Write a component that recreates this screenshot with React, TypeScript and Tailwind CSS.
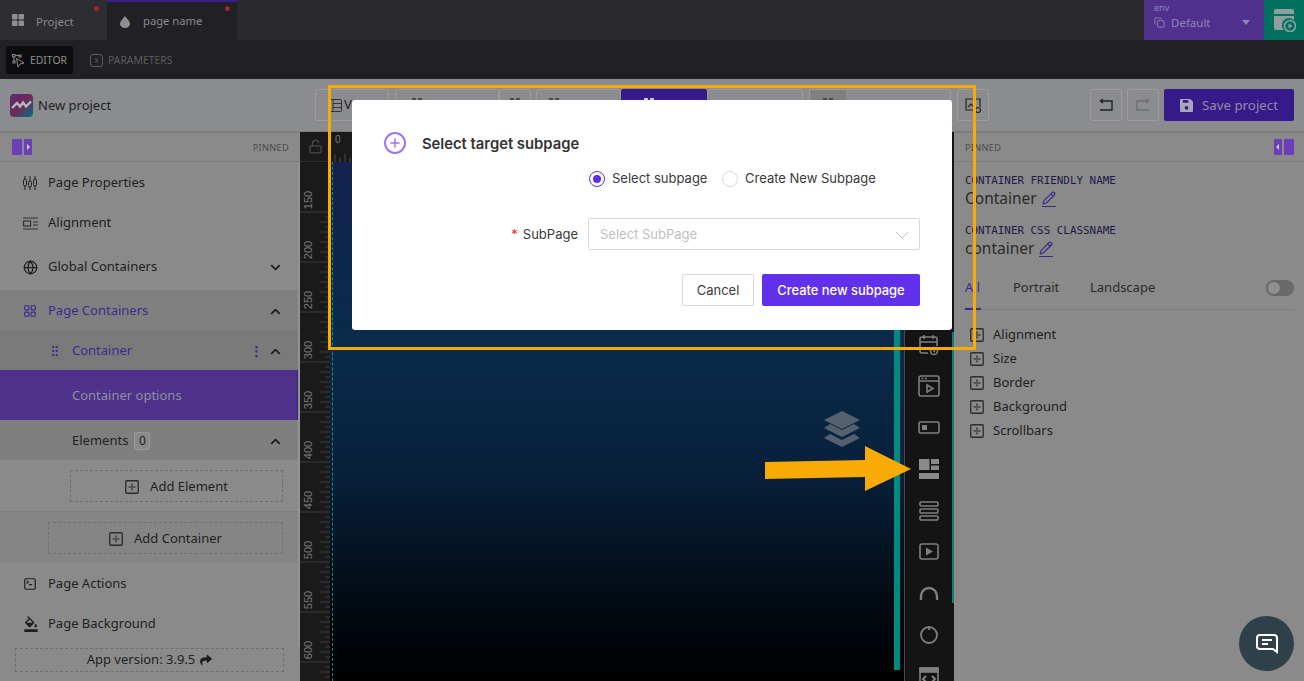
import {
  ChevronDown,
  ChevronUp,
  Copy,
  EllipsisVertical,
  Globe,
  GripVertical,
  LayoutGrid,
  LockOpen,
  Pencil,
  Plus,
  SquareTerminal,
} from "lucide-react";
import { FaShare } from "react-icons/fa";
import { MdFormatColorFill } from "react-icons/md";
import type { ReactNode } from "react";

const sans = "font-['Noto_Sans','Open_Sans',sans-serif]";

function Logo() {
  return (
    <svg width="23" height="23" viewBox="0 0 23 23">
      <defs>
        <linearGradient id="logo" x1="0" y1="0" x2="1" y2="1">
          <stop offset="0" stopColor="#5a2a78" />
          <stop offset="0.5" stopColor="#6e2a55" />
          <stop offset="1" stopColor="#006f8a" />
        </linearGradient>
      </defs>
      <rect width="23" height="23" rx="4" fill="url(#logo)" />
      <path d="M2 14l5-5 3 3.5 3-4 3 4 5-5" fill="none" stroke="#b4b8c0" strokeWidth="2.4" />
    </svg>
  );
}

function PanelToggle({ flip }: { flip?: boolean }) {
  return (
    <svg width="20" height="16" viewBox="0 0 20 16" className={flip ? "-scale-x-100" : ""}>
      <rect x="0" width="10" height="16" rx="1" fill="#6b3fb5" />
      <rect x="12" width="8" height="16" rx="1" fill="#6b3fb5" />
      <path d="M15 5l3 3-3 3z" fill="#c9c9d6" />
    </svg>
  );
}

function PlusBox() {
  return (
    <svg width="14" height="14" viewBox="0 0 14 14" className="shrink-0">
      <rect x="0.75" y="0.75" width="12.5" height="12.5" rx="1" fill="none" stroke="#2c2c2c" strokeWidth="1.3" />
      <path d="M7 3.5v7M3.5 7h7" stroke="#555" strokeWidth="2" />
    </svg>
  );
}

function ToolBtn({ className, children }: { className: string; children?: ReactNode }) {
  return (
    <div className={`h-[32px] flex items-center shrink-0 border border-[#9c9c9c] rounded-[2px] overflow-hidden ${className}`}>
      {children}
    </div>
  );
}

// only the top of these shows above the dialog
function PeekIcon({ color = "#4a4a4a" }: { color?: string }) {
  return (
    <svg width="14" height="14" viewBox="0 0 14 14" fill={color}>
      <rect x="2" y="0" width="4" height="4" />
      <rect x="8" y="0" width="4" height="4" />
    </svg>
  );
}

function NavRow({
  icon,
  label,
  className = "",
  textClass = "text-[#1f1f1f]",
  right,
}: {
  icon?: ReactNode;
  label: ReactNode;
  className?: string;
  textClass?: string;
  right?: ReactNode;
}) {
  return (
    <div className={`h-[40px] flex items-center pl-[23px] pr-[17px] pt-[2px] text-[13px] ${textClass} ${className}`}>
      {icon && <span className="w-[25px] flex shrink-0">{icon}</span>}
      <span className="flex-1 flex items-center">{label}</span>
      {right}
    </div>
  );
}

function Sidebar() {
  return (
    <aside className={`w-[300px] shrink-0 flex flex-col bg-[#8a8a8a] ${sans} relative`}>
      <div className="h-[30px] flex items-center justify-between pl-[12px] pr-[11px] border-y border-[#7d7d7d]">
        <PanelToggle />
        <span className="text-[9.2px] tracking-[0.3px] pt-[2px] text-[#4c4c4c]">PINNED</span>
      </div>
      <NavRow icon={<PropsIcon />} label="Page Properties" />
      <NavRow icon={<AlignIcon />} label="Alignment" />
      <NavRow
        className="mt-[4px]"
        icon={<Globe size={15} color="#1f1f1f" />}
        label="Global Containers"
        right={<ChevronDown size={15} strokeWidth={3} color="#1f1f1f" />}
      />
      <NavRow
        className="mt-[4px] bg-[#808080]"
        textClass="text-[#3d2a8c]"
        icon={<LayoutGrid size={14} color="#3d2a8c" />}
        label="Page Containers"
        right={<ChevronUp size={15} strokeWidth={3} color="#1f1f1f" />}
      />
      <div className="h-[40px] flex items-center pl-[48px] pr-[17px] pt-[2px] bg-[#7a7a7a] text-[13px] text-[#3d2a8c]">
        <GripVertical size={14} color="#3d2a8c" className="mr-[10px]" />
        <span className="flex-1">Container</span>
        <EllipsisVertical size={15} color="#3d2a8c" className="mr-[4px]" />
        <ChevronUp size={15} strokeWidth={3} color="#1f1f1f" />
      </div>
      <div className="h-[50px] flex items-center pl-[72px] pt-[2px] bg-[#4d318a] border-r-[3px] border-[#35207a] text-[13px] text-[#8f8f9f]">
        Container options
      </div>
      <div className="h-[40px] flex items-center pl-[72px] pr-[17px] pt-[2px] bg-[#7f7f7f] text-[13px] text-[#1f1f1f]">
        <span>Elements</span>
        <span className="ml-[6px] w-[16px] h-[18px] flex items-center justify-center border border-[#9a9a9a] rounded-[2px] bg-[#8a8a8a] text-[12px]">0</span>
        <ChevronUp size={15} strokeWidth={3} color="#1f1f1f" className="ml-auto" />
      </div>
      <div className="h-[52px] flex items-center pl-[70px] pr-[17px] border-b border-[#7d7d7d] bg-[#8a8a8a]">
        <AddButton label="Add Element" />
      </div>
      <div className="h-[51px] flex items-center pl-[48px] pr-[17px] bg-[#858585]">
        <AddButton label="Add Container" />
      </div>
      <NavRow icon={<SquareTerminal size={14} color="#1f1f1f" />} label="Page Actions" />
      <NavRow icon={<MdFormatColorFill size={16} color="#1f1f1f" />} label="Page Background" />
      <div className="mt-[5px] ml-[15px] w-[269px] h-[24px] flex items-center justify-center gap-[5px] border border-dashed border-[#6f6f6f] text-[13px] text-[#1f1f1f]">
        App version: 3.9.5 <FaShare size={12} />
      </div>
      <div className="absolute right-0 top-[30px] bottom-[34px] w-[2px] bg-[#949494]" />
    </aside>
  );
}

function AddButton({ label }: { label: string }) {
  return (
    <div className="h-[32px] flex-1 flex items-center justify-center gap-[11px] pt-[2px] border border-dashed border-[#6f6f6f] text-[13px] text-[#1f1f1f]">
      <PlusBox />
      {label}
    </div>
  );
}

function PropsIcon() {
  return (
    <svg width="14" height="14" viewBox="0 0 14 14" fill="none" stroke="#1f1f1f" strokeWidth="1">
      <path d="M2 0v14M7 0v14M12 0v14" />
      <rect x="0.5" y="3" width="3" height="7" rx="1.5" fill="#8a8a8a" />
      <rect x="5.5" y="5" width="3" height="6" rx="1.5" fill="#8a8a8a" />
      <rect x="10.5" y="3" width="3" height="7" rx="1.5" fill="#8a8a8a" />
    </svg>
  );
}

function AlignIcon() {
  return (
    <svg width="15" height="13" viewBox="0 0 15 13" fill="none" stroke="#333" strokeWidth="1.2">
      <path d="M0 1h15M0 12h15M10 5h5M10 8h5" />
      <rect x="0.6" y="4" width="7" height="5" />
    </svg>
  );
}

function Ruler() {
  const ticks = [];
  for (let y = 0; y < 520; y += 5) {
    const major = y % 50 === 0;
    const len = major ? 30 : y % 10 === 0 ? 10 : 5;
    ticks.push(<rect key={y} x={30 - len} y={y + 50 - 0.5} width={len} height="1" fill={major ? "#3c3c3c" : "#3f3f3f"} />);
  }
  const labels = [150, 200, 250, 300, 350, 400, 450, 500, 550, 600];
  return (
    <svg width="30" height="519" className="block">
      {ticks}
      {labels.map((n, i) => (
        <text
          key={n}
          transform={`translate(12 ${i * 50 + 38}) rotate(-90)`}
          textAnchor="middle"
          fontSize="11"
          fontFamily="Liberation Sans, sans-serif"
          fill="#7a7a7a"
        >
          {n}
        </text>
      ))}
    </svg>
  );
}

function IconCell({ children }: { children: ReactNode }) {
  return <div className="h-[41.5px] shrink-0 flex items-center justify-center">{children}</div>;
}

function WidgetStrip() {
  const s = { fill: "none", stroke: "#7f7f7f", strokeWidth: 1.6 };
  return (
    <div className="w-[50px] shrink-0 h-full bg-[#141414] border-l border-[#4a4a4a] pt-[192px] pr-[2px] overflow-hidden flex flex-col relative">
      <IconCell>
        <svg width="20" height="22" viewBox="0 0 20 22" {...s}>
          <path d="M9 19H3a2 2 0 0 1-2-2V5a2 2 0 0 1 2-2h13a2 2 0 0 1 2 2v7M1 8h17M5 1v4M14 1v4" />
          <circle cx="15" cy="17" r="3.5" />
          <path d="M15 15.5V17l1 1" />
        </svg>
      </IconCell>
      <IconCell>
        <svg width="22" height="22" viewBox="0 0 22 22" {...s}>
          <rect x="1" y="1" width="20" height="20" rx="2" />
          <path d="M1 6h20M3.5 3.5h2M7 3.5h2" />
          <path d="M9 10l6 3.5L9 17z" />
        </svg>
      </IconCell>
      <IconCell>
        <svg width="22" height="14" viewBox="0 0 22 14" {...s}>
          <rect x="1" y="1" width="20" height="11" rx="1.5" />
          <rect x="4" y="4" width="5" height="5" fill="#7f7f7f" stroke="none" />
        </svg>
      </IconCell>
      <IconCell>
        <svg width="20" height="20" viewBox="0 0 20 20" fill="#8a8a8a">
          <rect x="0" y="0" width="10.5" height="11" />
          <rect x="12" y="0" width="8" height="5" />
          <rect x="12" y="6.5" width="8" height="4.5" />
          <rect x="0" y="14" width="20" height="6" />
        </svg>
      </IconCell>
      <IconCell>
        <svg width="20" height="20" viewBox="0 0 20 20" {...s}>
          <rect x="1" y="1" width="18" height="4" rx="1" />
          <rect x="1" y="8" width="18" height="4" rx="1" />
          <rect x="1" y="15" width="18" height="4" rx="1" />
        </svg>
      </IconCell>
      <IconCell>
        <svg width="20" height="18" viewBox="0 0 20 18" {...s}>
          <rect x="1" y="1" width="18" height="15" rx="2" />
          <path d="M7 4.5l7 4-7 4z" fill="#7f7f7f" stroke="none" />
        </svg>
      </IconCell>
      <IconCell>
        <svg width="20" height="14" viewBox="0 0 20 14" className="-mt-[2px]" fill="none" stroke="#7f7f7f" strokeWidth="2.4">
          <path d="M2 14V10a8 8 0 0 1 16 0v4" />
        </svg>
      </IconCell>
      <IconCell>
        <svg width="20" height="20" viewBox="0 0 20 20" fill="none" stroke="#7f7f7f" strokeWidth="1.8">
          <circle cx="10" cy="10" r="8" />
          <path d="M10 2v3" />
        </svg>
      </IconCell>
      <IconCell>
        <svg width="20" height="20" viewBox="0 0 20 20" fill="none" stroke="#7f7f7f" strokeWidth="1.6">
          <rect x="1" y="1" width="18" height="18" rx="1" />
          <rect x="1" y="1" width="18" height="4" fill="#7f7f7f" />
          <path d="M7 9l-3 3 3 3M13 9l3 3-3 3" strokeWidth="2" />
        </svg>
      </IconCell>
      <div className="absolute right-0 top-[200px] w-[2px] h-[271px] bg-[#0b7f78]" />
    </div>
  );
}

function Canvas() {
  return (
    <div className="flex-1 min-w-0 flex bg-[#1a1a1a]">
      <div className="w-[30px] shrink-0 flex flex-col">
        <div className="h-[30px] shrink-0 flex items-center justify-center border-b border-[#2c2c2c]">
          <LockOpen size={15} color="#4a4a4a" />
        </div>
        <Ruler />
      </div>
      <div className="flex-1 min-w-0 flex flex-col">
        <div className="h-[30px] shrink-0 relative bg-[#1a1a1a] text-[10px] leading-[14px] pl-[5px] pt-[1px] text-[#7a7a7a] font-['Liberation_Sans',sans-serif]">
          0
          <svg width="30" height="12" className="absolute left-[3px] bottom-0">
            <path d="M2 12V4M7 12V8M12 12V4M17 12V8M22 12V4M27 12V8" stroke="#4a4a4a" />
          </svg>
        </div>
        <div className="flex-1 flex min-h-0 border-l-[3px] border-transparent relative bg-[linear-gradient(180deg,#13234f_0%,#0a2b4a_35%,#07203a_60%,#020a12_85%,#000_100%)]">
          <div className="absolute -left-[1px] top-0 bottom-0 border-l border-dashed border-[#0e8f8a]" />
          <div className="flex-1 min-w-0 flex flex-col items-end relative">
            <svg width="36" height="38" viewBox="0 0 36 38" className="absolute right-[33px] top-[249px]" fill="#55606f">
              <path d="M18 0L36 9 18 18 0 9z" />
              <path d="M6 13l12 6 12-6 6 4-18 9-18-9z" />
              <path d="M6 23l12 6 12-6 6 4-18 9-18-9z" />
            </svg>
          </div>
          <div className="w-[7px] shrink-0 flex flex-col justify-end pb-[11px]">
            <div className="ml-[1px] w-[6px] h-[350px] bg-[#018a80]" />
          </div>
          <div className="w-[4px] shrink-0" />
        </div>
      </div>
      <WidgetStrip />
    </div>
  );
}

function Inspector() {
  const props = ["Alignment", "Size", "Border", "Background", "Scrollbars"];
  return (
    <aside className={`w-[350px] shrink-0 bg-[#8a8a8a] flex flex-col ${sans}`}>
      <div className="h-[30px] flex items-center justify-between pl-[11px] pr-[10px] border-y border-[#7d7d7d]">
        <span className="text-[9.2px] tracking-[0.3px] pt-[2px] text-[#4c4c4c]">PINNED</span>
        <PanelToggle flip />
      </div>
      <div className="pl-[11px] pr-[10px] pt-[12px] flex flex-col">
        <Field title="CONTAINER FRIENDLY NAME" value="Container" />
        <div className="h-[14px]" />
        <Field title="CONTAINER CSS CLASSNAME" value="container" />
        <div className="mt-[12px] h-[38px] flex items-start border-b border-[#7f7f7f] relative text-[13px] text-[#2a2a2a] pt-[6px]">
          <span className="w-[48px] text-[#3d2a8c]">All</span>
          <span className="w-[77px]">Portrait</span>
          <span>Landscape</span>
          <div className="absolute bottom-[-1px] left-0 w-[16px] h-[2px] bg-[#3d2a8c]" />
          <div className="ml-auto mt-[2px] w-[28px] h-[16px] rounded-full bg-[#6a6a6a] p-[2px]">
            <div className="w-[12px] h-[12px] rounded-full bg-[#8f8f8f]" />
          </div>
        </div>
        <div className="mt-[13px] flex flex-col pl-[5px]">
          {props.map((p) => (
            <div key={p} className="h-[24px] flex items-center gap-[9px] text-[13px] text-[#1f1f1f]">
              <PlusBox />
              {p}
            </div>
          ))}
        </div>
      </div>
    </aside>
  );
}

function Field({ title, value }: { title: string; value: string }) {
  return (
    <div className="flex flex-col">
      <div className="h-[14px] text-[10.9px] leading-[14px] text-[#1e1a45] font-['DejaVu_Sans_Mono',monospace]">{title}</div>
      <div className="h-[22px] flex items-center gap-[5px] text-[15.5px] text-[#2a2a2a]">
        {value}
        <span className="border-b border-[#3d2a8c] pb-[1px] flex">
          <Pencil size={14} color="#3d2a8c" />
        </span>
      </div>
    </div>
  );
}

function Modal() {
  return (
    <div className="absolute left-[352px] top-[100px] w-[600px] h-[230px] bg-white rounded-[3px] pl-[32px] pr-[32px] pt-[32px] font-['Inter',sans-serif] text-[#3a3a3a]">
      <div className="flex items-center h-[22px] gap-[16px]">
        <div className="w-[22px] h-[22px] rounded-full border-2 border-[#9a75f5] flex items-center justify-center">
          <Plus size={14} color="#9a75f5" strokeWidth={2.5} />
        </div>
        <span className="text-[14.8px] pt-[3px] font-semibold text-[#333]">Select target subpage</span>
      </div>
      <div className="mt-[15px] ml-[205px] h-[20px] flex items-center text-[13px]">
        <span className="w-[16px] h-[16px] rounded-full border border-[#6030ea] flex items-center justify-center mr-[7px]">
          <span className="w-[8px] h-[8px] rounded-full bg-[#6030ea]" />
        </span>
        <span className="w-[110px]">Select subpage</span>
        <span className="w-[16px] h-[16px] rounded-full border border-[#d9d9d9] mr-[7px]" />
        <span>Create New Subpage</span>
      </div>
      <div className="mt-[29px] flex items-center">
        <div className="w-[194px] text-right text-[13px] pt-[2px]">
          <span className="text-[#f5222d] mr-[5px]">*</span>SubPage
        </div>
        <div className="ml-[10px] flex-1 h-[32px] border border-[#d9d9d9] rounded-[2px] flex items-center justify-between pl-[11px] pr-[5px] pt-[1px] text-[13px] text-[#bfbfbf]">
          Select SubPage
          <ChevronDown size={24} color="#bfbfbf" strokeWidth={1} />
        </div>
      </div>
      <div className="mt-[24px] flex justify-end gap-[8px] text-[13px]">
        <div className="w-[72px] h-[32px] pt-[2px] border border-[#d9d9d9] rounded-[2px] flex items-center justify-center">Cancel</div>
        <div className="w-[158px] h-[32px] pt-[1px] bg-[#6030ea] rounded-[2px] flex items-center justify-center text-white text-[12.9px] font-medium">Create new subpage</div>
      </div>
    </div>
  );
}

export default function App() {
  return (
    <div className={`relative w-[1304px] h-[681px] overflow-hidden flex flex-col ${sans}`}>
      {/* Tabs */}
      <div className="h-[40px] shrink-0 flex bg-[#2a2a2e]">
        <div className="w-[107px] relative flex items-center pl-[12px] pt-[3px] bg-[#2e2e32] text-[11.5px] text-[#8a8a8a]">
          <svg width="12" height="12" viewBox="0 0 12 12" fill="#8f8f8f" className="mr-[12px] -mt-[3px]">
            <rect width="5.5" height="5.5" rx="1" />
            <rect x="6.5" width="5.5" height="5.5" rx="1" />
            <rect y="6.5" width="5.5" height="5.5" rx="1" />
            <rect x="6.5" y="6.5" width="5.5" height="5.5" rx="1" />
          </svg>
          Project
          <span className="absolute right-[8px] top-[6px] w-[5px] h-[5px] rounded-full bg-[#a3262a]" />
        </div>
        <div className="w-[130px] relative flex items-center pl-[12px] pt-[1px] bg-[#212125] border-t-2 border-[#3b1f8f] text-[11.2px] text-[#8a8a8a]">
          <svg width="10" height="12" viewBox="0 0 10 12" className="ml-[1px] mr-[13px]" fill="#8f8f8f">
            <path d="M5 0c2 3 5 5 5 8a5 4 0 0 1-10 0c0-3 3-5 5-8z" />
          </svg>
          page name
          <span className="absolute right-[7px] top-[4px] w-[5px] h-[5px] rounded-full bg-[#a3262a]" />
        </div>
        <div className="ml-auto w-[120px] bg-[#4f318d] flex flex-col pl-[10px] pr-[14px] text-[#8f86b5]">
          <span className="text-[9px] leading-[10px] mt-[3px]">env</span>
          <div className="flex items-center text-[11.5px] mt-[1px]">
            <Copy size={11} className="mr-[6px]" />
            Default
            <svg width="8" height="5" viewBox="0 0 8 5" className="ml-auto" fill="#8f86b5">
              <path d="M0 0h8L4 5z" />
            </svg>
          </div>
        </div>
        <div className="w-[40px] bg-[#00705f] flex items-center justify-center">
          <svg width="24" height="24" viewBox="0 0 24 24" fill="#8f9f9f">
            <path d="M2 3a2 2 0 0 1 2-2h16a2 2 0 0 1 2 2v3H2z" />
            <path d="M2 8h20v4a7 7 0 0 0-10 10H4a2 2 0 0 1-2-2z" />
            <circle cx="18" cy="18" r="5.5" fill="none" stroke="#8f9f9f" strokeWidth="1.6" />
            <path d="M16.5 15.5l4 2.5-4 2.5z" />
          </svg>
        </div>
      </div>

      {/* Editor / parameters */}
      <div className="h-[39px] shrink-0 flex items-center pl-[6px] pt-[1px] bg-[#212125] text-[10.4px]">
        <div className="h-[28px] w-[67px] flex items-center justify-center gap-[4px] pt-[1px] rounded-[2px] bg-[#0c0c0e] text-[#8f8f8f]">
          <svg width="14" height="14" viewBox="0 0 14 14" fill="none" stroke="#8a8a8a">
            <rect x="0.5" y="0.5" width="2.5" height="2.5" />
            <rect x="7" y="1" width="2" height="2" />
            <rect x="1" y="7" width="2" height="2" />
            <path d="M3 1.5h4M2 3v4" />
            <path d="M4.5 4.5l1.5 8.5 2-3 4-1z" />
          </svg>
          EDITOR
        </div>
        <div className="ml-[17px] pt-[1px] flex items-center gap-[5px] text-[#5c5c5c]">
          <div className="w-[13px] h-[13px] rounded-[3px] border border-[#5c5c5c] flex items-center justify-center text-[8px] leading-none">x</div>
          PARAMETERS
        </div>
      </div>

      {/* Toolbar */}
      <div className="h-[53px] shrink-0 flex items-center bg-[#8b8c8f] border-b border-[#7d7d7d]">
        <div className="w-[315px] shrink-0 flex items-center pl-[10px] gap-[5px] text-[13px] text-[#1f1f1f]">
          <Logo />
          <span className="pt-[2px]">New project</span>
        </div>
        <ToolBtn className="w-[74px] pl-[13px] text-[13px] text-[#1f1f1f]">
          <svg width="13" height="13" viewBox="0 0 13 13" fill="none" stroke="#333" className="mr-[2px]">
            <rect x="0.5" y="0.5" width="12" height="12" rx="1" />
            <path d="M4 1v11M4 4.5h8M4 8.5h8" />
          </svg>
          V
        </ToolBtn>
        <ToolBtn className="ml-[6px] w-[104px] pl-[14px]">
          <PeekIcon />
        </ToolBtn>
        <ToolBtn className="w-[32px] justify-center">
          <PeekIcon />
        </ToolBtn>
        <ToolBtn className="ml-[5px] w-[85px] pl-[10px]">
          <PeekIcon />
        </ToolBtn>
        <ToolBtn className="w-[86px] pl-[20px] bg-[#371a8a] border-[#371a8a]">
          <PeekIcon color="#c9c9d6" />
        </ToolBtn>
        <ToolBtn className="w-[96px]" />
        <ToolBtn className="ml-[6px] w-[142px]">
          <div className="w-[36px] h-full bg-[#808080] flex items-center justify-center">
            <PeekIcon />
          </div>
        </ToolBtn>
        <ToolBtn className="ml-[6px] w-[32px] justify-center">
          <svg width="17" height="15" viewBox="0 0 17 15" fill="none" stroke="#222" strokeWidth="1.2">
            <path d="M10 12H1V1h14v8" />
            <path d="M3 9l3-3 3 3" />
            <circle cx="13" cy="12" r="2.5" />
          </svg>
        </ToolBtn>
        <ToolBtn className="ml-[101px] w-[32px] justify-center">
          <svg width="14" height="14" viewBox="0 0 14 14" fill="none" stroke="#222" strokeWidth="1.4">
            <path d="M1 3h12v9H1M4 1L1.5 3 4 5" />
          </svg>
        </ToolBtn>
        <ToolBtn className="ml-[5px] w-[32px] justify-center">
          <svg width="14" height="14" viewBox="0 0 14 14" fill="none" stroke="#6f6f6f" strokeWidth="1.4">
            <path d="M13 3H1v9h12M10 1l2.5 2L10 5" />
          </svg>
        </ToolBtn>
        <div className="ml-[5px] w-[130px] h-[32px] shrink-0 rounded-[2px] bg-[#371a8a] flex items-center justify-center gap-[9px] text-[13.3px] text-[#8f8aa8]">
          <svg width="13" height="13" viewBox="0 0 14 14" fill="#a9a6bb">
            <path d="M1 0h10l3 3v10a1 1 0 0 1-1 1H1a1 1 0 0 1-1-1V1a1 1 0 0 1 1-1zm2 1v3h6V1zm4 6.5a2 2 0 1 0 0 4 2 2 0 0 0 0-4z" fillRule="evenodd" />
          </svg>
          <span className="pt-[1px]">Save project</span>
        </div>
      </div>

      {/* Workspace */}
      <div className="flex-1 min-h-0 flex">
        <Sidebar />
        <Canvas />
        <Inspector />
      </div>

      <Modal />

      {/* Annotations drawn over the screenshot */}
      <div className="absolute left-[328px] top-[85px] w-[648px] h-[265px] border-[3px] border-[#f8ab07] pointer-events-none" />
      <svg width="146" height="46" viewBox="0 0 146 46" className="absolute left-[765px] top-[446px]">
        <path d="M0 16l100-2V0l46 23-46 22V31L0 33z" fill="#f8ab07" />
      </svg>
      <div className="absolute left-[1239px] top-[616px] w-[55px] h-[55px] rounded-full bg-[#2e4049] flex items-center justify-center">
        <svg width="22" height="20" viewBox="0 0 22 20" fill="none" stroke="#fff" strokeWidth="2">
          <path d="M4 1h14a3 3 0 0 1 3 3v14l-4-3H4a3 3 0 0 1-3-3V4a3 3 0 0 1 3-3z" />
          <path d="M6 6h10M6 10h6" />
        </svg>
      </div>
    </div>
  );
}
